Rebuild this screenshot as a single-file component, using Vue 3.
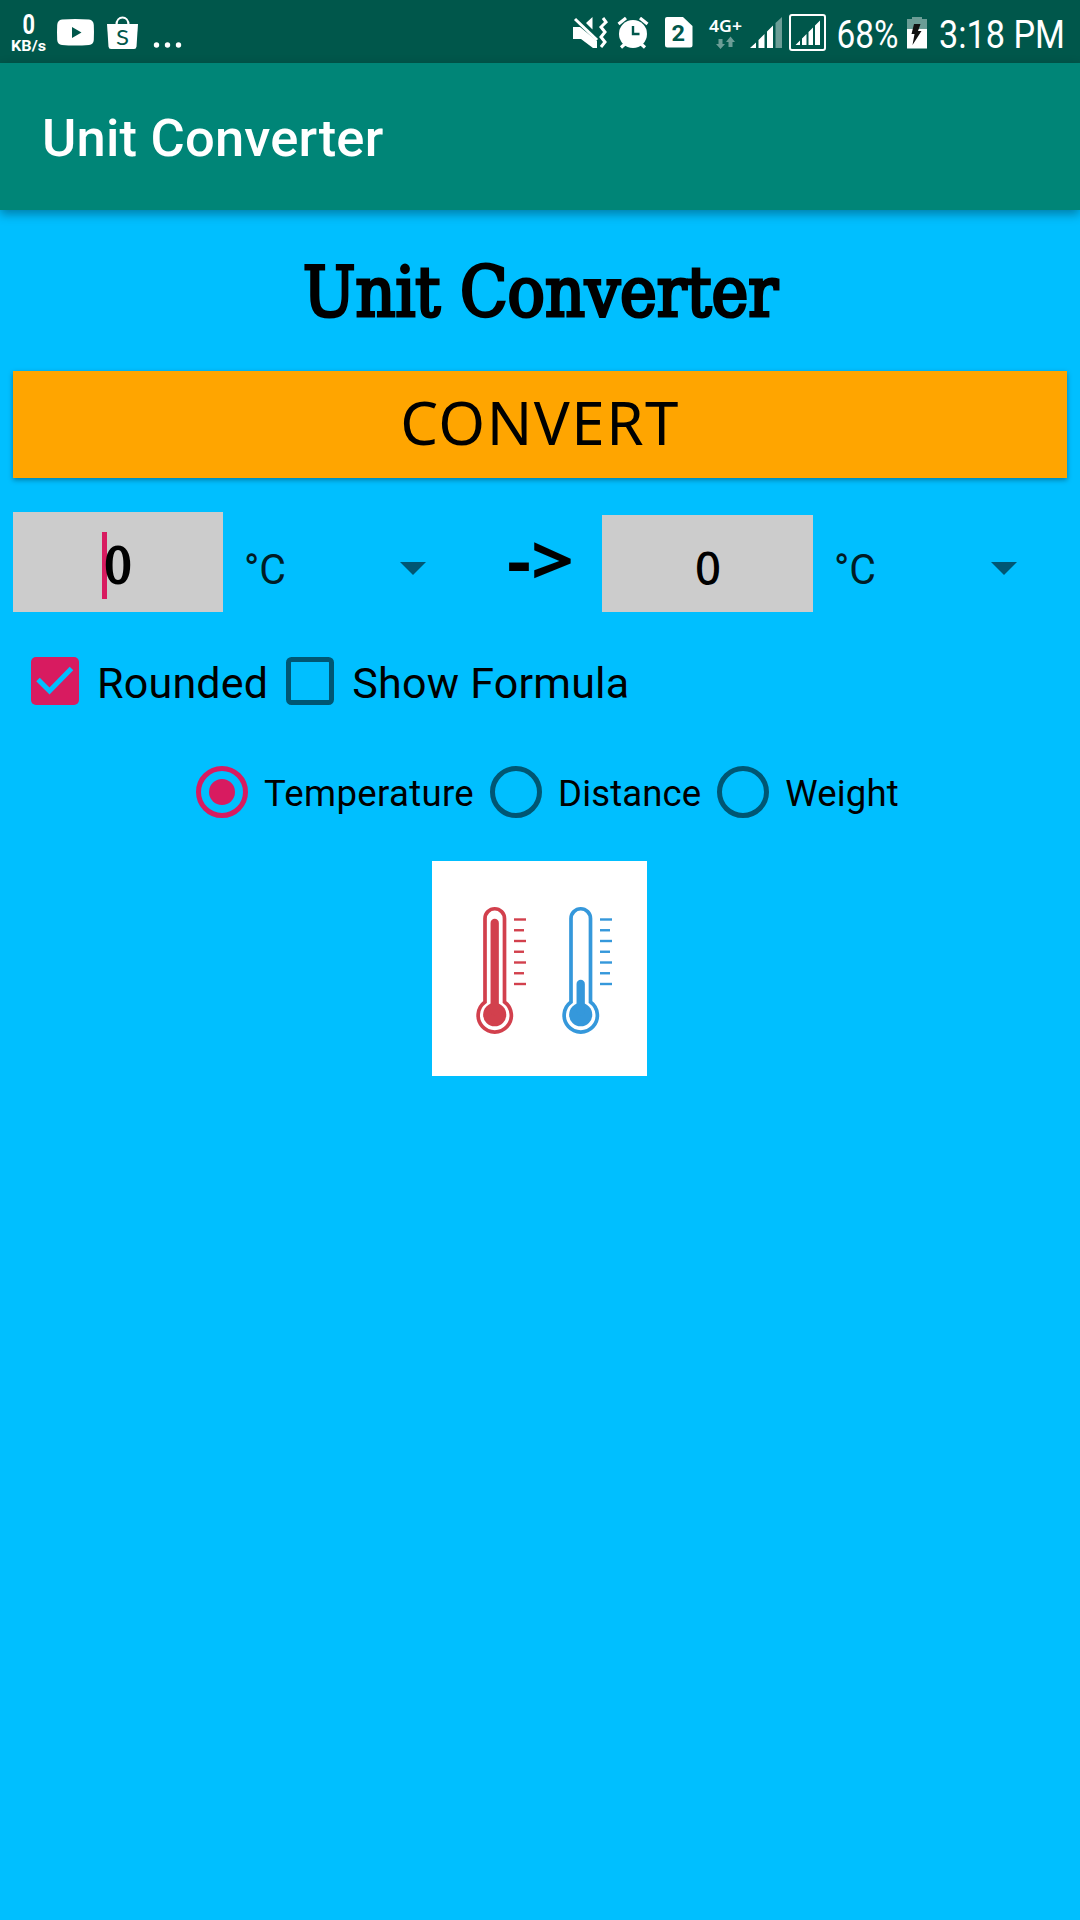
<script setup>
import { ref } from 'vue'

const unitTypes = ['Temperature', 'Distance', 'Weight']
const selected = ref('Temperature')
const ticks = [0, 1, 2, 3, 4, 5, 6]
</script>

<template>
  <div class="screen">
    <header class="status">
      <svg class="status-art" width="1080" height="63" viewBox="0 0 1080 63" fill="#fff">
        <g font-family="Roboto, sans-serif" font-weight="700">
          <text x="22.5" y="34" font-size="27" textLength="12.5" lengthAdjust="spacingAndGlyphs">0</text>
          <text x="11" y="50.5" font-size="15" textLength="35" lengthAdjust="spacingAndGlyphs">KB/s</text>
        </g>
        <path fill-rule="evenodd" d="M62 19.500Q75 18.500 89 19.500Q93.500 20 93.800 25Q94.200 32 93.800 40Q93.500 44.500 89 45Q75 46 62 45Q57.500 44.500 57.200 40Q56.800 32 57.200 25Q57.500 20 62 19.500ZM72 27V38L81.500 32.500Z" />
        <path d="M107 24H138L136.500 46.500Q136.300 49 134 49H111Q108.700 49 108.500 46.500Z" />
        <path d="M116.500 25C116.500 15 128.500 15 128.500 25" fill="none" stroke="#fff" stroke-width="2.200" />
        <text x="116" y="44.500" font-size="22" font-family="Lato, sans-serif" fill="#00574b" textLength="13" lengthAdjust="spacingAndGlyphs">S</text>
        <circle cx="156.500" cy="45" r="2.700" /><circle cx="167.500" cy="45" r="2.700" /><circle cx="178.500" cy="45" r="2.700" />

        <path d="M573 27H580L597 41V48H593L581 39H573ZM586 23L592.500 17V29.500Z" />
        <path d="M575 19L597 40" fill="none" stroke="#fff" stroke-width="3" />
        <path d="M603 18L606 22L601 27L605 32L601 37L605 42L601 47" fill="none" stroke="#fff" stroke-width="3" />
        <circle cx="633" cy="34" r="14" />
        <path d="M618.500 24L626 18M640 18L647.500 24M621 47.500L626 43M645 47.500L640 43" stroke="#fff" stroke-width="3.200" />
        <path d="M633 26V34H639.500" fill="none" stroke="#00574b" stroke-width="2.400" />
        <path d="M667 17H683L692.500 26V45Q692.500 47.500 690 47.500H667.500Q665 47.500 665 45V19Q665 17 667 17Z" />
        <text x="671.500" y="41" font-family="Roboto, sans-serif" font-weight="700" font-size="22" fill="#00574b" textLength="13.500" lengthAdjust="spacingAndGlyphs">2</text>
        <text x="709" y="31.500" font-family="'Noto Sans', sans-serif" font-weight="600" font-size="16.500" textLength="33" lengthAdjust="spacingAndGlyphs">4G+</text>
        <g opacity=".42">
          <path d="M718.500 39H722.500V44H725L720.500 49L716 44H718.500Z" />
          <path d="M728.500 47H732.500V42H735L730.500 36.500L726 42H728.500Z" />
          <path d="M775.500 23L782 17V48H775.500Z" />
        </g>
        <path d="M750 48L756 42.500V48ZM758.500 40L764.500 34V48H758.500ZM767 31.500L773 25.500V48H767Z" />
        <rect x="790" y="15" width="35" height="35" rx="2" fill="none" stroke="#fff" stroke-width="2" />
        <path d="M795.500 45L800 40.500V45ZM802 38.500L806.500 34V45H802ZM808.500 32L813 27.500V45H808.500ZM815 25.500L820 20.500V45H815Z" />
        <g font-family="Roboto, sans-serif" font-size="39.500">
          <text x="836.500" y="48" textLength="62" lengthAdjust="spacingAndGlyphs">68%</text>
          <text x="939" y="48" textLength="126" lengthAdjust="spacingAndGlyphs">3:18 PM</text>
        </g>
        <path d="M907 19H912V17H922V19H927V29H907Z" opacity=".42" />
        <path d="M907 29H927V48.500H907Z" />
        <path d="M914 24H920.500L918 31H921.500L912.500 45L914.500 34H911.500Z" fill="#111" />
      </svg>
    </header>

    <div class="appbar"><span>Unit Converter</span></div>

    <main>
      <h1>
        <svg width="480" height="80" viewBox="0 0 480 80">
          <text x="4" y="63.500" textLength="475" lengthAdjust="spacingAndGlyphs">Unit Converter</text>
        </svg>
      </h1>

      <button class="convert">CONVERT</button>

      <section class="fields">
        <div class="box from">
          <i class="cursor"></i>
          <svg width="28" height="70" viewBox="0 0 28 70"><text x="0" y="56" textLength="28" lengthAdjust="spacingAndGlyphs">0</text></svg>
        </div>
        <div class="spinner">
          <svg class="unit" width="44" height="50" viewBox="0 0 44 50"><text x="0" y="40" textLength="42" lengthAdjust="spacingAndGlyphs">°C</text></svg>
          <svg width="26" height="13" viewBox="0 0 26 13"><path d="M0 0H26L13 13Z" /></svg>
        </div>
        <div class="arrow">
          <svg width="70" height="90" viewBox="0 0 70 90"><text x="0" y="73" textLength="67" lengthAdjust="spacingAndGlyphs">-&gt;</text></svg>
        </div>
        <div class="box to">
          <svg width="28" height="70" viewBox="0 0 28 70"><text x="1" y="55.500" textLength="26" lengthAdjust="spacingAndGlyphs">0</text></svg>
        </div>
        <div class="spinner">
          <svg class="unit" width="44" height="50" viewBox="0 0 44 50"><text x="0" y="40" textLength="42" lengthAdjust="spacingAndGlyphs">°C</text></svg>
          <svg width="26" height="13" viewBox="0 0 26 13"><path d="M0 0H26L13 13Z" /></svg>
        </div>
      </section>

      <section class="checks">
        <label>
          <svg width="48" height="48" viewBox="0 0 48 48">
            <rect width="48" height="48" rx="5" fill="#d81b60" />
            <path d="M7 22.500L18.500 34L40.500 11.500" fill="none" stroke="#00bfff" stroke-width="5" />
          </svg>
          <span>Rounded</span>
        </label>
        <label>
          <svg width="48" height="48" viewBox="0 0 48 48">
            <rect x="2.500" y="2.500" width="43" height="43" rx="3" fill="none" stroke="#005673" stroke-width="5" />
          </svg>
          <span>Show Formula</span>
        </label>
      </section>

      <section class="radios">
        <label v-for="type in unitTypes" :key="type" @click="selected = type">
          <svg width="52" height="52" viewBox="0 0 52 52">
            <circle cx="26" cy="26" r="23.500" fill="none" :stroke="selected === type ? '#d81b60' : '#005673'" stroke-width="5" />
            <circle v-if="selected === type" cx="26" cy="26" r="13" fill="#d81b60" />
          </svg>
          <span>{{ type }}</span>
        </label>
      </section>

      <svg class="picture" width="215" height="215" viewBox="0 0 215 215">
        <rect width="215" height="215" fill="#fff" />
        <g v-for="(color, n) in ['#d2404d', '#3598db']" :key="color" :transform="`translate(${n * 86} 0)`">
          <path d="M53 141V57.500A9.700 9.700 0 0 1 72.500 57.500V141A16.600 16.600 0 1 1 53 141Z" fill="none" :stroke="color" stroke-width="3.700" />
          <circle cx="62.700" cy="153.700" r="11.600" :fill="color" />
          <path :d="n ? 'M62.700 150V123' : 'M62.700 150V62'" :stroke="color" stroke-width="8.300" stroke-linecap="round" />
          <rect v-for="t in ticks" :key="t" x="82" :y="57.300 + t * 10.750" :width="t % 2 ? 10 : 12" height="2.400" :fill="color" />
        </g>
      </svg>
    </main>
  </div>
</template>

<style>
body {
  margin: 0;
  background: #00bfff;
}
</style>

<style scoped>
.screen {
  width: 1080px;
  height: 1920px;
  overflow: hidden;
  background: #00bfff;
  font-family: Roboto, sans-serif;
  color: #000;
}
svg {
  display: block;
  flex: none;
  overflow: visible;
}
.status {
  height: 63px;
  background: #00574b;
}
.appbar {
  display: flex;
  align-items: center;
  height: 147px;
  padding: 3px 0 0 42px;
  box-sizing: border-box;
  background: #008577;
  box-shadow: 0 4px 10px rgba(0, 0, 0, 0.35);
  color: #fff;
  font-size: 52.500px;
  font-weight: 500;
  letter-spacing: 0.200px;
}
main {
  display: flex;
  flex-direction: column;
  align-items: center;
}
h1 {
  margin: 42px 0 0 -3px;
  height: 80px;
  font: 400 69.500px "DejaVu Serif Condensed", "DejaVu Serif", serif;
}
h1 text {
  stroke: #000;
  stroke-width: 3px;
}
.convert {
  margin: 39px 0 0;
  width: 1054px;
  height: 107px;
  padding: 0 0 5px;
  border: 0;
  background: #ffa500;
  box-shadow: 0 2px 5px rgba(0, 0, 0, 0.35);
  color: #000;
  font: 60px "Noto Sans", sans-serif;
  letter-spacing: 1.500px;
}
.fields {
  display: flex;
  align-items: flex-end;
  width: 1054px;
  height: 100px;
  margin-top: 34px;
}
.box {
  display: flex;
  align-items: center;
  justify-content: center;
  background: #ccc;
}
.from {
  position: relative;
  width: 210px;
  height: 100px;
  font: 48px "DejaVu Serif Condensed", "DejaVu Serif", serif;
}
.from text {
  stroke: #000;
  stroke-width: 2.200px;
}
.from svg {
  position: relative;
}
.cursor {
  position: absolute;
  left: 89px;
  top: 20px;
  width: 5px;
  height: 67px;
  background: #d81b60;
}
.to {
  width: 211px;
  height: 97px;
  font: 500 46px "Noto Sans", sans-serif;
}
.spinner {
  display: flex;
  align-items: center;
  justify-content: space-between;
  width: 182px;
  height: 87px;
  margin-left: 21px;
  font-size: 43px;
  fill: #005673;
}
.to + .spinner {
  width: 183px;
}
.unit {
  fill: #001d26;
}
.arrow {
  width: 95px;
  margin-left: 81px;
  height: 100px;
  font: 700 68px "Noto Sans", sans-serif;
}
.checks {
  display: flex;
  align-self: flex-start;
  gap: 18px;
  margin: 45px 0 0 31px;
  height: 48px;
}
label {
  display: flex;
  align-items: center;
}
.checks label {
  gap: 18px;
  font-size: 43px;
  letter-spacing: 0.220px;
}
.checks span {
  padding-top: 3px;
}
.radios {
  display: flex;
  align-self: flex-start;
  gap: 16px;
  margin: 61px 0 0 196px;
  height: 52px;
}
.radios label {
  gap: 16px;
  font-size: 36.500px;
  letter-spacing: 0.150px;
}
.radios label:first-child {
  letter-spacing: 0.350px;
}
.radios span {
  padding-top: 2px;
}
.picture {
  margin: 43px 1px 0 0;
}
</style>
